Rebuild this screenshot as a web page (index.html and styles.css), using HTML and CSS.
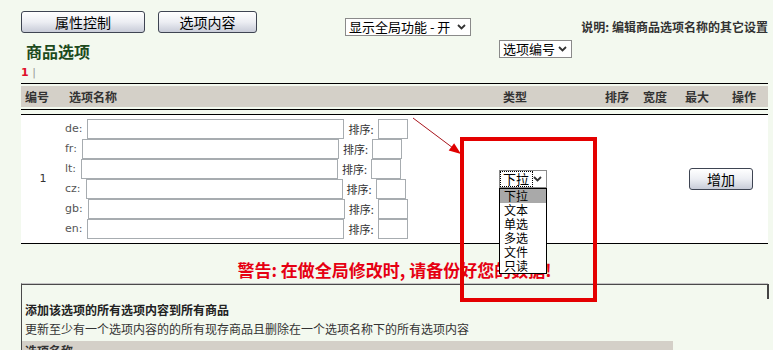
FILE: index.html
```html
<!DOCTYPE html>
<html lang="zh-CN">
<head>
  <meta charset="UTF-8">
  <meta name="viewport" content="width=device-width, initial-scale=1.0">
  <title>商品选项</title>
  <link rel="stylesheet" href="styles.css">
</head>
<body>
  <div class="toolbar">
    <div class="tabs">
      <button class="tab tab-wide">属性控制</button>
      <button class="tab">选项内容</button>
    </div>
    <span class="select select-global">显示全局功能 - 开<svg class="chevron" viewBox="0 0 9 6"><polyline points="1,1 4.5,4.5 8,1"/></svg></span>
    <p class="note">说明: 编辑商品选项名称的其它设置</p>
  </div>

  <div class="title-row">
    <h2 class="title">商品选项</h2>
    <span class="select select-sort">选项编号<svg class="chevron" viewBox="0 0 9 6"><polyline points="1,1 4.5,4.5 8,1"/></svg></span>
  </div>
  <div class="pager"><b>1</b> |</div>

  <div class="options">
    <div class="grid head">
      <span>编号</span>
      <span>选项名称</span>
      <span>类型</span>
      <span>排序</span>
      <span>宽度</span>
      <span>最大</span>
      <span>操作</span>
    </div>
    <div class="rule"></div>
    <div class="grid row">
      <span class="num">1</span>
      <div class="fields">
        <div class="field"><label>de:</label><input class="name-input"><span class="sort-label">排序:</span><input class="sort-input"></div>
        <div class="field"><label>fr:</label><input class="name-input"><span class="sort-label">排序:</span><input class="sort-input"></div>
        <div class="field"><label>lt:</label><input class="name-input"><span class="sort-label">排序:</span><input class="sort-input"></div>
        <div class="field"><label>cz:</label><input class="name-input"><span class="sort-label">排序:</span><input class="sort-input"></div>
        <div class="field"><label>gb:</label><input class="name-input"><span class="sort-label">排序:</span><input class="sort-input"></div>
        <div class="field"><label>en:</label><input class="name-input"><span class="sort-label">排序:</span><input class="sort-input"></div>
      </div>
      <div class="type-cell">
        <span class="select select-type"><span class="focus">下拉</span><svg class="chevron" viewBox="0 0 9 6"><polyline points="1,1 4.5,4.5 8,1"/></svg></span>
        <ul class="type-list">
          <li class="active">下拉</li>
          <li>文本</li>
          <li>单选</li>
          <li>多选</li>
          <li>文件</li>
          <li>只读</li>
        </ul>
      </div>
      <button class="tab add-btn">增加</button>
    </div>
  </div>

  <p class="warning">警告: 在做全局修改时, 请备份好您的数据!</p>

  <div class="panel">
    <p class="panel-title">添加该选项的所有选项内容到所有商品</p>
    <p class="panel-text">更新至少有一个选项内容的的所有现存商品且删除在一个选项名称下的所有选项内容</p>
    <div class="panel-bar">选项名称</div>
  </div>

  <!-- annotation drawn over the screenshot -->
  <div class="mark-box"></div>
  <svg class="mark-arrow" viewBox="0 0 70 50" width="70" height="50">
    <line x1="13" y1="8" x2="53" y2="38" stroke="#a8141c" stroke-width="1"/>
    <polygon points="61,44 48.7,40.4 54.1,33.2" fill="#e00000"/>
  </svg>
</body>
</html>
```

FILE: styles.css
```css
html, body {
  overflow: hidden;
}
body {
  margin: 0;
  padding: 11px 5px 0 21px;
  background: #f3f9ef;
  font: 12px/14px "Noto Sans CJK SC", sans-serif;
  color: #222;
  position: relative;
}
p, h2, ul {
  margin: 0;
  padding: 0;
}

.toolbar {
  display: flex;
  align-items: flex-start;
  height: 29px;
}
.tabs {
  display: flex;
  gap: 13px;
}
.tab {
  width: 99px;
  height: 22px;
  padding: 0;
  border: 1px solid #3e4452;
  border-radius: 3px;
  background: linear-gradient(#ffffff, #eceef3 50%, #c8ccd8);
  font: 14px/20px "Noto Sans CJK SC", sans-serif;
  color: #000;
}
.tab-wide {
  width: 124px;
}

.select {
  display: inline-flex;
  align-items: center;
  justify-content: space-between;
  box-sizing: border-box;
  height: 18px;
  padding: 0 4px 0 3px;
  border: 1px solid #8a8a8a;
  background: #fff;
  font: 13px/16px "Noto Sans CJK SC", sans-serif;
  color: #000;
}
.chevron {
  width: 9px;
  height: 6px;
  fill: none;
  stroke: #333;
  stroke-width: 1.8;
}
.select-global {
  width: 126px;
  margin: 7px 0 0 88px;
}
.note {
  margin: 9px 0 0 auto;
  font-weight: bold;
  color: #333;
}

.title-row {
  display: grid;
  grid-template-columns: 478px auto;
  height: 25px;
}
.title {
  padding: 1px 0 0 5px;
  font-size: 16px;
  line-height: 20px;
  color: #1d4a1d;
}
.select-sort {
  width: 73px;
}
.pager {
  font: 11px/14px "DejaVu Sans", sans-serif;
  color: #999;
  margin: 1px 0 3px;
}
.pager b {
  color: #e0102a;
}

.options {
  border-top: 1px solid #000;
}
.grid {
  display: grid;
  grid-template-columns: 44px 434px 102px 38px 42px 47px 40px;
}
.head {
  margin-top: 2px;
  height: 21px;
  background: #d4d0c8;
  font-weight: bold;
  line-height: 21px;
  color: #333;
}
.head span {
  padding-left: 4px;
}
.rule {
  margin-top: 2px;
  border-top: 1px solid #000;
}
.row {
  margin-top: 4px;
  padding: 4px 0;
  border-top: 1px solid #000;
  border-bottom: 1px solid #000;
  background: #fff;
  align-items: center;
}
.num {
  text-align: center;
  font: 11px/14px "DejaVu Sans", sans-serif;
  color: #333;
}
.field {
  display: flex;
  align-items: center;
  height: 20px;
}
.field label {
  margin-right: 5px;
  font: 11px/14px "DejaVu Sans", sans-serif;
  color: #555;
}
.field input {
  box-sizing: border-box;
  height: 20px;
  margin: 0;
  border: 1px solid #a7acb0;
  background: #fff;
}
.name-input {
  width: 257px;
}
.sort-label {
  margin: 0 4px;
  font-size: 11px;
  color: #333;
}
.sort-input {
  width: 30px;
}

.type-cell {
  position: relative;
  z-index: 2;
}
.select-type {
  width: 48px;
  padding-left: 1px;
}
.focus {
  outline: 1px dotted #000;
  padding: 0 3px 0 2px;
  line-height: 14px;
}
.type-list {
  position: absolute;
  top: 18px;
  left: 0;
  width: 48px;
  box-sizing: border-box;
  border: 1px solid #000;
  background: #fff;
  list-style: none;
  font: 12px/14px "Noto Sans CJK SC", sans-serif;
  color: #000;
}
.type-list li {
  height: 14px;
  padding-left: 4px;
}
.type-list .active {
  background: #a9a9a9;
}
.add-btn {
  grid-column: 4 / 8;
  justify-self: end;
  width: 64px;
  margin-right: 15px;
}

.warning {
  margin: 16px 0 3px;
  text-align: center;
  font-size: 17px;
  line-height: 20px;
  font-weight: bold;
  color: #e60012;
}

.panel {
  position: relative;
  padding-top: 18px;
  border-top: 1px solid #c4c4c4;
  box-shadow: inset 0 1px 0 #4a4a4a;
  border-left: 1px solid #4a4a4a;
}
.panel::after {
  content: "";
  position: absolute;
  top: 0;
  right: -1px;
  width: 2px;
  height: 15px;
  background: #444;
}
.panel-title {
  padding-left: 3px;
  font-weight: bold;
  line-height: 16px;
  color: #222;
}
.panel-text {
  margin-top: 3px;
  padding-left: 3px;
  line-height: 16px;
  color: #333;
}
.panel-bar {
  width: 648px;
  margin-top: 4px;
  padding: 3px 0 0 3px;
  height: 20px;
  background: #d4d0c8;
  font-weight: bold;
  color: #333;
}

.mark-box {
  position: absolute;
  left: 460px;
  top: 137px;
  width: 137px;
  height: 165px;
  box-sizing: border-box;
  border: 4px solid #e40000;
  z-index: 3;
}
.mark-arrow {
  position: absolute;
  left: 400px;
  top: 110px;
  z-index: 3;
}
```
